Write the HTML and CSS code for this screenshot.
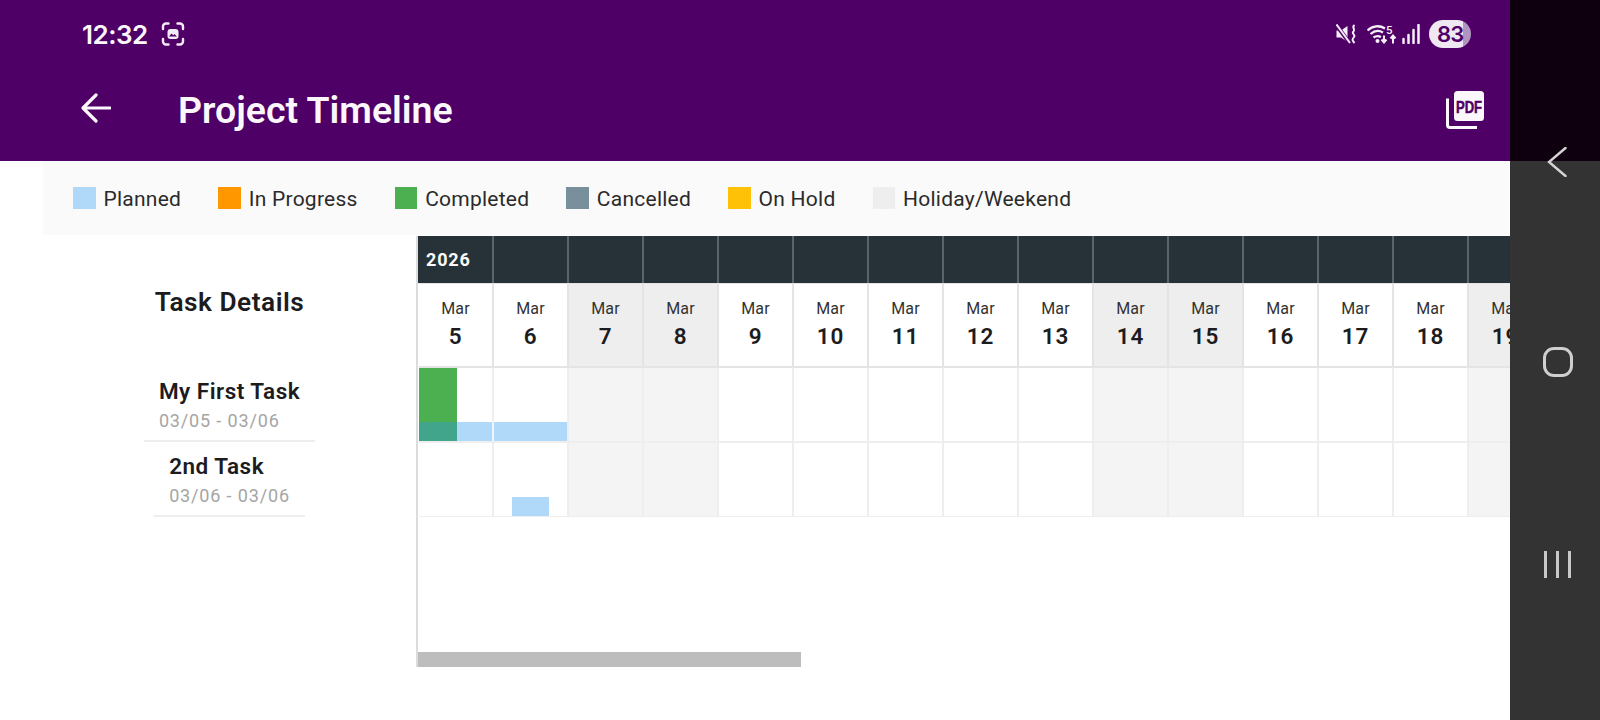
FILE: index.html
```html
<!DOCTYPE html>
<html lang="en">
<head>
<meta charset="utf-8">
<title>Project Timeline</title>
<link rel="stylesheet" href="styles.css">
</head>
<body>
<div class="screen">
  <div class="app">
    <header class="appbar">
      <div class="statusbar">
        <div class="status-left">
          <span class="clock">12:32</span>
          <svg class="shot-icon" viewBox="0 0 24 24" width="24" height="24" fill="none" stroke="#f3ecf6" stroke-width="2.400" stroke-linecap="round">
            <path d="M2 7V4.500a3 3 0 0 1 3-3h2.500M16.500 1.500H19a3 3 0 0 1 3 3V7M22 17v2.500a3 3 0 0 1-3 3h-2.500M7.500 22.500H5a3 3 0 0 1-3-3V17"/>
            <rect x="6.500" y="7" width="11" height="10" rx="3" fill="#f3ecf6" stroke="none"/>
            <path d="M8 14.500l2.500-3 1.800 1.800 1.200-1.300 2.500 2.500z" fill="#4f0066" stroke="none"/>
          </svg>
        </div>
        <div class="status-right">
          <svg width="21" height="20" viewBox="0 0 21 20" class="mute">
            <path d="M0.500 6.500h4.500L11.500 2v16L5 13.500H0.500z" fill="#f5eff7"/>
            <path d="M0 0.500l13.500 18.500" stroke="#4f0066" stroke-width="4"/>
            <path d="M0.500 0.500l13.500 18.500" stroke="#f5eff7" stroke-width="2"/>
            <path d="M18.500 1c-3.500 2.500 1.500 4-1 6.500-2.500 2 2.500 3 .5 5.500-2 2.500-2 3 .5 6" fill="none" stroke="#f5eff7" stroke-width="2"/>
          </svg>
          <svg width="30" height="20" viewBox="0 0 30 20" class="wifi">
            <path d="M0.500 6.500C5.500 1.500 12.500 1 18 4.500M3.500 10C7.500 6.500 12 6 16 8.500M6.500 13.500c2.500-1.800 5-1.800 7.500-.5" fill="none" stroke="#f5eff7" stroke-width="2.300"/>
            <circle cx="10.500" cy="17" r="2" fill="#f5eff7"/>
            <text x="19" y="9.500" class="wifi-five">5</text>
            <path d="M17 11.500v7M14.500 15.500l2.500 3 2.500-3M26 19.500v-7.500M23.500 14.500l2.500-3 2.500 3" fill="none" stroke="#f5eff7" stroke-width="2"/>
          </svg>
          <svg width="19" height="20" viewBox="0 0 19 20" class="signal">
            <path d="M1.500 15v4M6.500 11v8M11.500 6v13M16.500 1v18" stroke="#f5eff7" stroke-width="2.500" stroke-linecap="round"/>
          </svg>
          <div class="battery"><span class="battery-num">83</span></div>
        </div>
      </div>
      <div class="toolbar">
        <svg class="back" viewBox="0 0 30 30" width="30" height="30" fill="none" stroke="#fbf7fc" stroke-width="3.200" stroke-linecap="round" stroke-linejoin="round">
          <path d="M29 15H2M15 2L2 15l13 13"/>
        </svg>
        <h1 class="title">Project Timeline</h1>
        <svg class="pdf" viewBox="0 0 38 38" width="38" height="38">
          <path d="M1.500 7.500V34a2.500 2.500 0 0 0 2.500 2.500h27" fill="none" stroke="#fbf7fc" stroke-width="3"/>
          <rect x="8" y="0" width="30" height="30" rx="3.500" fill="#fbf7fc"/>
          <text transform="translate(10 22) scale(0.79 1)" class="pdf-text">PDF</text>
        </svg>
      </div>
    </header>

    <div class="legend">
      <div class="legend-item"><span class="swatch planned"></span>Planned</div>
      <div class="legend-item"><span class="swatch progress"></span>In Progress</div>
      <div class="legend-item"><span class="swatch completed"></span>Completed</div>
      <div class="legend-item"><span class="swatch cancelled"></span>Cancelled</div>
      <div class="legend-item"><span class="swatch hold"></span>On Hold</div>
      <div class="legend-item"><span class="swatch holiday"></span>Holiday/Weekend</div>
    </div>

    <div class="content">
      <aside class="sidebar">
        <div class="side-head">Task Details</div>
        <div class="task">
          <div class="task-name">My First Task</div>
          <div class="task-dates">03/05 - 03/06</div>
        </div>
        <div class="task">
          <div class="task-name">2nd Task</div>
          <div class="task-dates">03/06 - 03/06</div>
        </div>
      </aside>

      <section class="gantt">
        <div class="gantt-row year-row">
          <div class="year-cell">2026</div><div class="year-cell"></div><div class="year-cell"></div><div class="year-cell"></div><div class="year-cell"></div><div class="year-cell"></div><div class="year-cell"></div><div class="year-cell"></div><div class="year-cell"></div><div class="year-cell"></div><div class="year-cell"></div><div class="year-cell"></div><div class="year-cell"></div><div class="year-cell"></div><div class="year-cell"></div>
        </div>
        <div class="gantt-row date-row">
          <div class="date-cell"><span class="month">Mar</span><span class="day">5</span></div>
          <div class="date-cell"><span class="month">Mar</span><span class="day">6</span></div>
          <div class="date-cell off"><span class="month">Mar</span><span class="day">7</span></div>
          <div class="date-cell off"><span class="month">Mar</span><span class="day">8</span></div>
          <div class="date-cell"><span class="month">Mar</span><span class="day">9</span></div>
          <div class="date-cell"><span class="month">Mar</span><span class="day">10</span></div>
          <div class="date-cell"><span class="month">Mar</span><span class="day">11</span></div>
          <div class="date-cell"><span class="month">Mar</span><span class="day">12</span></div>
          <div class="date-cell"><span class="month">Mar</span><span class="day">13</span></div>
          <div class="date-cell off"><span class="month">Mar</span><span class="day">14</span></div>
          <div class="date-cell off"><span class="month">Mar</span><span class="day">15</span></div>
          <div class="date-cell"><span class="month">Mar</span><span class="day">16</span></div>
          <div class="date-cell"><span class="month">Mar</span><span class="day">17</span></div>
          <div class="date-cell"><span class="month">Mar</span><span class="day">18</span></div>
          <div class="date-cell off"><span class="month">Mar</span><span class="day">19</span></div>
        </div>
        <div class="gantt-row task-row">
          <div class="cell"></div><div class="cell"></div><div class="cell off"></div><div class="cell off"></div><div class="cell"></div><div class="cell"></div><div class="cell"></div><div class="cell"></div><div class="cell"></div><div class="cell off"></div><div class="cell off"></div><div class="cell"></div><div class="cell"></div><div class="cell"></div><div class="cell off"></div>
          <div class="bar bar-actual"></div>
          <div class="bar bar-planned-one"></div>
        </div>
        <div class="gantt-row task-row task-row-last">
          <div class="cell"></div><div class="cell"></div><div class="cell off"></div><div class="cell off"></div><div class="cell"></div><div class="cell"></div><div class="cell"></div><div class="cell"></div><div class="cell"></div><div class="cell off"></div><div class="cell off"></div><div class="cell"></div><div class="cell"></div><div class="cell"></div><div class="cell off"></div>
          <div class="bar bar-planned-two"></div>
        </div>
        <div class="scroll-thumb"></div>
      </section>
    </div>
  </div>

  <nav class="navbar">
    <svg class="nav-back" viewBox="0 0 20 30" width="20" height="30" fill="none" stroke="#d6d3d6" stroke-width="2.400" stroke-linecap="round">
      <path d="M18.500 1L2 15l16.500 14"/>
    </svg>
    <span class="nav-home"></span>
    <div class="nav-recents"><span></span><span></span><span></span></div>
  </nav>
</div>
</body>
</html>
```

FILE: styles.css
```css
* { box-sizing: border-box; }

html, body {
  margin: 0;
  height: 100%;
  overflow: hidden;
  background: #fff;
}

body {
  font-family: Roboto, "Liberation Sans", sans-serif;
  color: #1c1c1e;
}

.screen {
  display: flex;
  width: 1600px;
  height: 720px;
  overflow: hidden;
}

.app {
  display: flex;
  flex-direction: column;
  width: 1510px;
  flex: none;
}

.appbar {
  height: 161px;
  flex: none;
  background: #4f0066;
  color: #fff;
}

.statusbar {
  display: flex;
  align-items: center;
  justify-content: space-between;
  height: 68px;
  padding: 0 39px 0 82px;
}

.status-left {
  display: flex;
  align-items: center;
  gap: 13px;
}

.clock {
  font-family: Inter, Roboto, sans-serif;
  font-size: 26px;
  font-weight: 600;
  color: #fbf7fc;
  letter-spacing: -0.5px;
}

.status-right {
  display: flex;
  align-items: center;
}

.mute { margin-right: 10px; }
.wifi { margin-right: 5px; }
.signal { margin-right: 8px; }

.wifi-five {
  font-family: Roboto, sans-serif;
  font-size: 11.500px;
  font-weight: 500;
  fill: #f5eff7;
}

.battery {
  display: flex;
  align-items: center;
  width: 42px;
  height: 28px;
  padding-left: 8px;
  border-radius: 14px;
  background: linear-gradient(90deg, #efe8f2 82%, #b294c0 82%);
}

.battery-num {
  font-family: Inter, Roboto, sans-serif;
  font-size: 22px;
  font-weight: 600;
  color: #4f0066;
  letter-spacing: -0.8px;
}

.toolbar {
  display: flex;
  align-items: center;
  height: 85px;
  padding: 0 26px 0 81px;
}

.back {
  flex: none;
  margin-right: 67px;
  margin-top: -5px;
}

.title {
  flex: 1;
  margin: -2px 0 0;
  font-size: 37.500px;
  font-weight: 600;
  color: #fbf7fc;
}

.pdf {
  flex: none;
  margin-top: -2px;
}

.pdf-text {
  font-family: "Liberation Sans", Roboto, sans-serif;
  font-size: 16.500px;
  font-weight: 700;
  fill: #4f0066;
  stroke: #4f0066;
  stroke-width: 0.500;
}

.legend {
  display: flex;
  align-items: center;
  height: 74px;
  margin-left: 43px;
  padding: 1px 0 0 30px;
  gap: 37px;
  background: #fafafa;
  font-size: 21px;
  letter-spacing: 0.25px;
  color: #2a2a2a;
  flex: none;
}

.legend-item {
  display: flex;
  align-items: center;
  gap: 8px;
}

.swatch {
  width: 22.500px;
  height: 22.500px;
  margin-top: -1px;
  flex: none;
}

.planned { background: #b0d9f9; }
.progress { background: #ff9800; }
.completed { background: #4caf50; }
.cancelled { background: #78909c; }
.hold { background: #ffc107; }
.holiday { background: #eeeeee; }

.content {
  display: flex;
  height: 432px;
  margin-top: 1px;
  flex: none;
}

.sidebar {
  display: flex;
  flex-direction: column;
  align-items: center;
  width: 373px;
  margin-left: 43px;
  flex: none;
}

.side-head {
  display: flex;
  align-items: center;
  height: 131px;
  font-size: 26.250px;
  font-weight: 600;
  letter-spacing: 0.5px;
}

.task {
  height: 75px;
  padding: 11px 15px 0;
  border-bottom: 2px solid #eeeeee;
}

.task-name {
  font-size: 22.500px;
  font-weight: 600;
  line-height: 27px;
  letter-spacing: 0.5px;
}

.task-dates {
  margin-top: 3px;
  font-size: 18px;
  line-height: 26px;
  letter-spacing: 0.85px;
  color: #a5a5a5;
}

.gantt {
  position: relative;
  flex: 1;
  min-width: 0;
  height: 431px;
  overflow: hidden;
  border-left: 2px solid #dcdcdc;
}

.gantt-row {
  display: grid;
  grid-template-columns: repeat(15, 75px);
  position: relative;
  padding-left: 1px;
}

.year-row {
  height: 47px;
  background: #263238;
}

.year-cell {
  display: flex;
  align-items: center;
  padding-left: 7px;
  border-right: 2px solid #56656d;
  font-size: 18px;
  font-weight: 700;
  letter-spacing: 0.8px;
  color: #fafafa;
}

.date-row {
  height: 85px;
}

.date-cell {
  display: flex;
  flex-direction: column;
  align-items: center;
  padding-top: 15px;
  border-top: 1px solid #e4e4e4;
  border-right: 2px solid #e4e4e4;
  border-bottom: 2px solid #e4e4e4;
  background: #fff;
}

.date-cell.off {
  background: #eeeeee;
}

.month {
  font-size: 16px;
  line-height: 20px;
  letter-spacing: 0.2px;
  color: #333;
}

.day {
  margin-top: 4px;
  font-size: 22.500px;
  line-height: 27px;
  font-weight: 600;
  letter-spacing: 0.8px;
  color: #1c1c1e;
}

.task-row {
  height: 75px;
}

.task-row-last {
  height: 74px;
}

.cell {
  border-right: 2px solid #eeeeee;
  border-bottom: 2px solid #eeeeee;
  background: #fff;
}

.task-row-last .cell {
  border-bottom-width: 1px;
}

.cell.off {
  background: #f4f4f4;
}

.bar {
  position: absolute;
}

.bar-actual {
  top: 0;
  left: 1px;
  width: 37.500px;
  height: 73px;
  background: #4caf50;
}

.bar-planned-one {
  top: 54px;
  left: 1px;
  width: 148px;
  height: 19px;
  background: linear-gradient(90deg, #40a58a 37.500px, #b0d9f9 37.500px, #b0d9f9 73px, #eef6fc 73px, #eef6fc 75px, #b0d9f9 75px);
}

.bar-planned-two {
  top: 54px;
  left: 94px;
  width: 37px;
  height: 19px;
  background: #b0d9f9;
}

.scroll-thumb {
  position: absolute;
  left: 0;
  bottom: 0;
  width: 383px;
  height: 15px;
  background: #bdbdbd;
}

.navbar {
  display: flex;
  flex-direction: column;
  align-items: center;
  flex: 1;
  padding-top: 147px;
  background: linear-gradient(180deg, #0f0010 161px, #333333 161px);
}

.nav-back {
  flex: none;
  margin-left: 4px;
}

.nav-home {
  width: 30px;
  height: 30px;
  margin-top: 170px;
  margin-left: 5px;
  border: 3px solid #cfcfcf;
  border-radius: 11px;
}

.nav-recents {
  display: flex;
  gap: 9px;
  margin-top: 174px;
  margin-left: 5px;
}

.nav-recents span {
  width: 3px;
  height: 27px;
  background: #c8c8c8;
}
```
